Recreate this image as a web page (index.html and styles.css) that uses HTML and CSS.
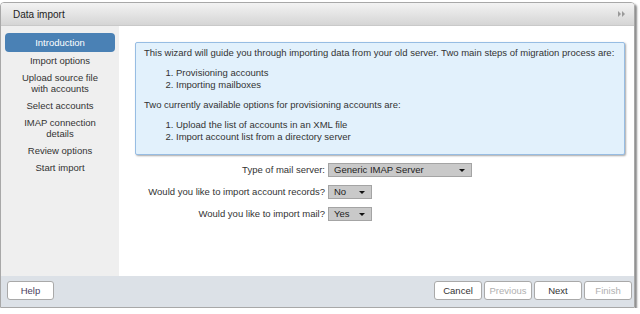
FILE: index.html
```html
<!DOCTYPE html>
<html>
<head>
<meta charset="utf-8">
<link rel="stylesheet" href="styles.css">
</head>
<body>
<div class="window">
  <div class="titlebar">
    <span class="title">Data import</span>
    <svg class="collapse" width="8" height="6" viewBox="0 0 8 6"><polygon points="0,0 3,3 0,6" fill="#9a9a9a"/><polygon points="4,0 7,3 4,6" fill="#9a9a9a"/></svg>
  </div>
  <div class="main">
    <div class="sidebar">
      <div class="step active">Introduction</div>
      <div class="step">Import options</div>
      <div class="step">Upload source file<br>with accounts</div>
      <div class="step">Select accounts</div>
      <div class="step">IMAP connection<br>details</div>
      <div class="step">Review options</div>
      <div class="step">Start import</div>
    </div>
    <div class="content">
      <div class="info">
        <p>This wizard will guide you through importing data from your old server. Two main steps of migration process are:</p>
        <ol>
          <li>Provisioning accounts</li>
          <li>Importing mailboxes</li>
        </ol>
        <p>Two currently available options for provisioning accounts are:</p>
        <ol>
          <li>Upload the list of accounts in an XML file</li>
          <li>Import account list from a directory server</li>
        </ol>
      </div>
      <div class="form">
        <label class="lbl">Type of mail server:</label>
        <div class="select wide">Generic IMAP Server<span class="caret"></span></div>
        <label class="lbl">Would you like to import account records?</label>
        <div class="select narrow">No<span class="caret"></span></div>
        <label class="lbl">Would you like to import mail?</label>
        <div class="select narrow">Yes<span class="caret"></span></div>
      </div>
    </div>
  </div>
  <div class="footer">
    <button class="btn help">Help</button>
    <div class="nav">
      <button class="btn">Cancel</button>
      <button class="btn disabled">Previous</button>
      <button class="btn">Next</button>
      <button class="btn disabled">Finish</button>
    </div>
  </div>
</div>
</body>
</html>
```
FILE: styles.css
```css
html, body {
  margin: 0;
  padding: 0;
  background: #ffffff;
}
body {
  padding-top: 2px;
  font-family: "Liberation Sans", Arial, sans-serif;
  font-size: 9.5px;
  color: #333;
}
.window {
  width: 635px;
  height: 306px;
  border: 1px solid #a8a8a8;
  border-radius: 4px 4px 0 0;
  box-shadow: 2px 2px 2px rgba(0,0,0,0.45);
  display: flex;
  flex-direction: column;
  overflow: hidden;
  box-sizing: border-box;
}
.titlebar {
  height: 23px;
  flex: none;
  background: linear-gradient(#f3f3f3, #d5d5d5);
  border-bottom: 1px solid #c9c9c9;
  box-sizing: border-box;
  display: flex;
  align-items: center;
  justify-content: space-between;
  padding: 0 8px 0 12px;
}
.title {
  font-size: 10px;
  color: #222;
}
.collapse {
  display: block;
}
.main {
  flex: 1;
  display: flex;
  min-height: 0;
}
.sidebar {
  width: 118px;
  flex: none;
  background: #efefef;
  padding: 7px 4px 0 4px;
  box-sizing: border-box;
}
.step {
  text-align: center;
  line-height: 11px;
  padding: 3px 0;
  color: #333;
}
.step.active {
  background: #4a81b5;
  color: #fff;
  border-radius: 4px;
  padding: 4px 0;
  line-height: 11px;
}
.content {
  flex: 1;
  background: #fff;
  padding: 16px 9px 0 16px;
}
.info {
  background: #e2f1fc;
  border: 1px solid #97bde3;
  border-radius: 2px;
  box-shadow: 1px 1px 2px rgba(0,0,0,0.35);
  padding: 4px 8px 3px;
  line-height: 12px;
  color: #333;
}
.info p {
  margin: 0 0 8px;
}
.info ol {
  margin: 0 0 8px;
  padding-left: 32px;
}
.form {
  margin-top: 8px;
  display: grid;
  grid-template-columns: 190px auto;
  column-gap: 3px;
  row-gap: 8px;
  align-items: center;
  justify-items: start;
}
.lbl {
  justify-self: end;
  line-height: 14px;
  color: #333;
}
.select {
  position: relative;
  height: 14px;
  box-sizing: border-box;
  background: #c9c9c9;
  border: 1px solid #a4a4a4;
  line-height: 12px;
  padding-left: 5px;
  color: #222;
}
.select.wide { width: 144px; }
.select.narrow { width: 44px; }
.caret {
  position: absolute;
  right: 6px;
  top: 5px;
  width: 0;
  height: 0;
  border-left: 3px solid transparent;
  border-right: 3px solid transparent;
  border-top: 3px solid #111;
}
.footer {
  height: 31px;
  flex: none;
  background: #dce1e7;
  display: flex;
  justify-content: space-between;
  align-items: flex-start;
  padding: 5px 2px 0 6px;
  box-sizing: border-box;
}
.nav {
  display: flex;
  gap: 2px;
}
.btn {
  height: 19px;
  width: 48px;
  background: #fff;
  border: 1px solid #a9a9a9;
  border-radius: 3px;
  font-family: "Liberation Sans", Arial, sans-serif;
  font-size: 9.5px;
  color: #333;
  padding: 0;
}
.btn.help {
  width: 47px;
  color: #4a4060;
}
.btn.disabled {
  color: #b0b0b0;
}
```
